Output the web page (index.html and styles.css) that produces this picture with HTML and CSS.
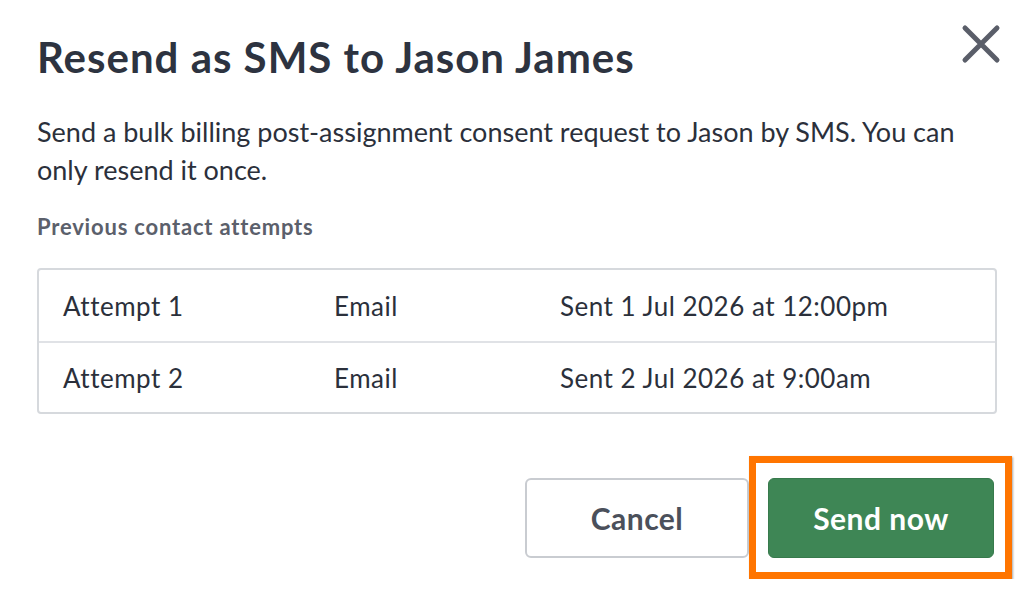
FILE: index.html
```html
<!DOCTYPE html>
<html lang="en">
<head>
    <meta charset="UTF-8">
    <meta name="viewport" content="width=device-width, initial-scale=1.0">
    <title>Resend as SMS</title>
    <link rel="stylesheet" href="styles.css">
</head>
<body>
    <div class="modal">
        <div class="modal-header">
            <h1 class="modal-title">Resend as SMS to Jason James</h1>
            <button class="close-btn" aria-label="Close">
                <svg width="40" height="40" viewBox="0 0 40 40">
                    <path d="M4 4 L36 36 M36 4 L4 36" stroke="#5a5e69" stroke-width="5" stroke-linecap="round" fill="none"/>
                </svg>
            </button>
        </div>

        <p class="modal-text">Send a bulk billing post-assignment consent request to Jason by SMS. You can only resend it once.</p>

        <div class="section-label">Previous contact attempts</div>

        <div class="attempts">
            <div class="attempt-row">
                <span>Attempt 1</span>
                <span>Email</span>
                <span>Sent 1 Jul 2026 at 12:00pm</span>
            </div>
            <div class="attempt-row">
                <span>Attempt 2</span>
                <span>Email</span>
                <span>Sent 2 Jul 2026 at 9:00am</span>
            </div>
        </div>

        <div class="modal-footer">
            <button class="btn btn-cancel">Cancel</button>
            <div class="highlight">
                <button class="btn btn-send">Send now</button>
            </div>
        </div>
    </div>
</body>
</html>
```

FILE: styles.css
```css
* {
    margin: 0;
    padding: 0;
    box-sizing: border-box;
}

body {
    font-family: 'Lato', 'Liberation Sans', sans-serif;
    background: white;
    color: #2b303b;
}

.modal {
    padding: 33px 23px 0 37px;
}

.modal-header {
    display: flex;
    justify-content: space-between;
    align-items: flex-start;
}

.modal-title {
    font-size: 42px;
    font-weight: 700;
    letter-spacing: 1px;
    color: #2d3340;
    line-height: 48px;
}

.close-btn {
    background: none;
    border: none;
    cursor: pointer;
    margin-top: -9px;
    margin-right: -4px;
    width: 40px;
    height: 40px;
}

.modal-text {
    font-size: 27px;
    line-height: 38px;
    margin-top: 32px;
    max-width: 930px;
}

.section-label {
    font-size: 22px;
    font-weight: 700;
    letter-spacing: 0.8px;
    color: #5b606b;
    margin-top: 23px;
    line-height: 30px;
}

.attempts {
    margin-top: 26px;
    border: 2px solid #d6d9dd;
    border-radius: 4px;
}

.attempt-row {
    display: grid;
    grid-template-columns: 271px 226px 1fr;
    padding-left: 24px;
    height: 71px;
    align-items: center;
    font-size: 26px;
    letter-spacing: 0.5px;
    color: #2b303b;
}

.attempt-row + .attempt-row {
    border-top: 2px solid #e0e2e6;
}

.modal-footer {
    display: flex;
    justify-content: flex-end;
    align-items: center;
    margin-top: 42px;
    margin-right: -15px;
}

.btn {
    width: 224px;
    height: 80px;
    border-radius: 6px;
    font-family: 'Lato', 'Liberation Sans', sans-serif;
    font-size: 30px;
    font-weight: 700;
    letter-spacing: 0.5px;
    cursor: pointer;
}

.btn-cancel {
    background: white;
    border: 2px solid #c9ccd1;
    color: #4b505b;
}

.btn-send {
    width: 226px;
    background: #3e8655;
    border: 1px solid #377a4c;
    color: white;
}

.highlight {
    border: 7px solid #ff7500;
    padding: 15px 11px 14px 12px;
    box-shadow: 1px 1px 2px rgba(0, 0, 0, 0.35);
}
```
